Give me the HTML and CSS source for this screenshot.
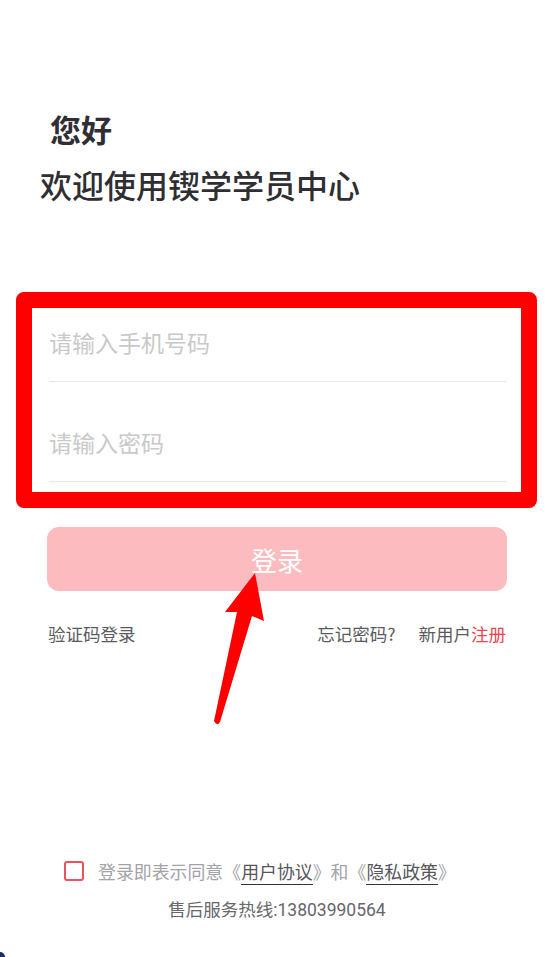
FILE: index.html
```html
<!DOCTYPE html>
<html lang="zh-CN">
<head>
<meta charset="utf-8">
<title>登录</title>
<link rel="stylesheet" href="styles.css">
</head>
<body>
<div class="page">
  <div class="greet">
    <div class="hello">您好</div>
    <div class="welcome">欢迎使用锲学学员中心</div>
  </div>

  <div class="mark-box">
    <div class="field"><span class="ph">请输入手机号码</span></div>
    <div class="field field-second"><span class="ph">请输入密码</span></div>
  </div>

  <div class="login-btn">登录</div>

  <div class="links">
    <span class="link">验证码登录</span>
    <span class="link-right"><span class="link">忘记密码?</span><span class="link new-user">新用户<span class="reg">注册</span></span></span>
  </div>

  <div class="agree">
    <span class="check"></span>
    <span class="agree-text">登录即表示同意《<span class="u">用户协议</span>》和《<span class="u">隐私政策</span>》</span>
  </div>
  <div class="hotline">售后服务热线:13803990564</div>

  <svg class="arrow" width="554" height="957" viewBox="0 0 554 957">
    <path d="M255,573 L264,621 L252,616 L220,722 Q217,727 214,721 L237,612 L225,612 Z" fill="#ff0000"/>
  </svg>
  <div class="corner"></div>
</div>
</body>
</html>
```

FILE: styles.css
```css
html, body {
  margin: 0;
  padding: 0;
  background: #ffffff;
}
.page {
  position: relative;
  width: 554px;
  height: 957px;
  overflow: hidden;
  font-family: "Noto Sans CJK SC", "Noto Sans", sans-serif;
  display: flex;
  flex-direction: column;
}
.greet {
  padding: 109px 0 0 40px;
  color: #2f2f33;
}
.hello {
  font-size: 31px;
  line-height: 40px;
  font-weight: 700;
  margin-left: 10px;
}
.welcome {
  font-size: 32px;
  line-height: 40px;
  font-weight: 500;
  margin-top: 15px;
}
.mark-box {
  margin: 88px 17px 0 16px;
  border: 16px solid #ff0000;
  border-radius: 8px;
  background: #fff;
  padding: 0 14px 10px 17px;
  display: flex;
  flex-direction: column;
}
.field {
  height: 73px;
  border-bottom: 1px solid #e8e8e8;
  display: flex;
  align-items: center;
}
.field-second {
  margin-top: 26px;
}
.ph {
  font-size: 23px;
  color: #c9c9c9;
  line-height: 30px;
  margin-top: -6px;
}
.login-btn {
  margin: 19px 47px 0 47px;
  height: 64px;
  border-radius: 12px;
  background: #fcbcbf;
  color: #ffffff;
  font-size: 26px;
  display: flex;
  align-items: center;
  justify-content: center;
}
.links {
  margin: 31px 48px 0 48px;
  display: flex;
  justify-content: space-between;
  font-size: 17.5px;
  line-height: 24px;
  color: #5a5a5e;
}
.link-right {
  display: flex;
  gap: 23px;
}
.reg {
  color: #f0434f;
}
.agree {
  margin-top: 213px;
  padding-left: 64px;
  display: flex;
  align-items: center;
  height: 24px;
}
.check {
  width: 16px;
  height: 16px;
  border: 2.5px solid #e9545c;
  border-radius: 3px;
  margin-right: 14px;
}
.agree-text {
  font-size: 17.9px;
  line-height: 24px;
  color: #a3a3a8;
}
.u {
  color: #55555a;
  border-bottom: 1.5px solid #333;
}
.hotline {
  margin-top: 15px;
  text-align: center;
  font-family: "Roboto", "Noto Sans CJK SC", sans-serif;
  font-size: 17.5px;
  line-height: 24px;
  color: #67676c;
}
.arrow {
  position: absolute;
  left: 0;
  top: 0;
  pointer-events: none;
}
.corner {
  position: absolute;
  left: -5px;
  bottom: -5px;
  width: 10px;
  height: 10px;
  border-radius: 50%;
  background: #1d2a6b;
}
```
